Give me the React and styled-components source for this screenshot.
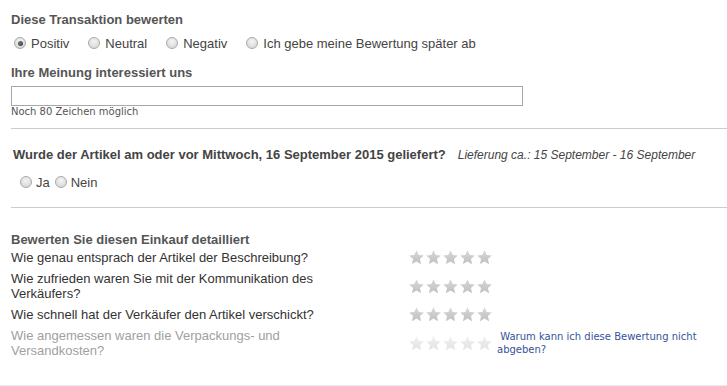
import styled, { createGlobalStyle } from "styled-components"

const Global = createGlobalStyle`
  body {
    margin: 0;
    background: #ffffff;
    font-family: "Liberation Sans", Arial, sans-serif;
  }
`

const questions = [
  { text: "Wie genau entsprach der Artikel der Beschreibung?" },
  { text: "Wie zufrieden waren Sie mit der Kommunikation des Verkäufers?" },
  { text: "Wie schnell hat der Verkäufer den Artikel verschickt?" },
  { text: "Wie angemessen waren die Verpackungs- und Versandkosten?", disabled: true },
]

function Radio({ checked, label }) {
  return (
    <Option>
      <Circle $checked={checked} />
      <span>{label}</span>
    </Option>
  )
}

function Stars({ disabled }) {
  const id = disabled ? "starOff" : "starOn"
  return (
    <StarRow>
      {[0, 1, 2, 3, 4].map((i) => (
        <svg key={i} width="15" height="15" viewBox="0 0 24 24">
          <defs>
            <linearGradient id={id} x1="0" y1="0" x2="0" y2="1">
              <stop offset="0" stopColor={disabled ? "#f0f0f0" : "#d8d8d8"} />
              <stop offset="1" stopColor={disabled ? "#e3e3e3" : "#c0c0c0"} />
            </linearGradient>
          </defs>
          <path
            d="M12 0.5l3.5 7.6 8.2.8-6.2 5.6 1.8 8.1L12 18.4l-7.3 4.2 1.8-8.1L.3 8.9l8.2-.8z"
            fill={`url(#${id})`}
          />
        </svg>
      ))}
    </StarRow>
  )
}

export default function App() {
  return (
    <Page>
      <Global />
      <Section>
        <Title>Diese Transaktion bewerten</Title>
        <Options>
          <Radio checked label="Positiv" />
          <Radio label="Neutral" />
          <Radio label="Negativ" />
          <Radio label="Ich gebe meine Bewertung später ab" />
        </Options>
        <Title $top={14}>Ihre Meinung interessiert uns</Title>
        <Comment type="text" />
        <Hint>Noch 80 Zeichen möglich</Hint>
      </Section>
      <Divider />
      <Delivery>
        <Question>
          Wurde der Artikel am oder vor Mittwoch, 16 September 2015 geliefert?
          <Estimate>Lieferung ca.: 15 September - 16 September</Estimate>
        </Question>
        <YesNo>
          <Radio label="Ja" />
          <Radio label="Nein" />
        </YesNo>
      </Delivery>
      <Divider />
      <Detail>
        <Title>Bewerten Sie diesen Einkauf detailliert</Title>
        <Grid>
          {questions.map((q, i) => (
            <Row key={i}>
              <Label $disabled={q.disabled}>{q.text}</Label>
              <Stars disabled={q.disabled} />
              {q.disabled ? (
                <Why href="#">&nbsp;Warum kann ich diese Bewertung nicht abgeben?</Why>
              ) : (
                <span />
              )}
            </Row>
          ))}
        </Grid>
      </Detail>
      <Bottom />
    </Page>
  )
}

const Page = styled.div`
  width: 727px;
  height: 386px;
  overflow: hidden;
  display: flex;
  flex-direction: column;
`

const Section = styled.div`
  padding: 12px 0 0 11px;
  display: flex;
  flex-direction: column;
  align-items: flex-start;
`

const Title = styled.div`
  font-size: 13px;
  line-height: 15px;
  font-weight: bold;
  color: #555555;
  margin-top: ${(p) => p.$top || 0}px;
`

const Options = styled.div`
  display: flex;
  align-items: center;
  gap: 19px;
  height: 16px;
  margin: 8px 0 0 3px;
`

const Option = styled.label`
  display: inline-flex;
  align-items: center;
  gap: 5px;
  font-size: 13px;
  color: #444444;
`

const Circle = styled.span`
  width: 12px;
  height: 12px;
  box-sizing: border-box;
  border-radius: 50%;
  border: 1px solid #a9a9a9;
  background: radial-gradient(circle at 50% 35%, #f4f4f4 0%, #dcdcdc 70%, #cfcfcf 100%);
  position: relative;
  &::after {
    content: "";
    display: ${(p) => (p.$checked ? "block" : "none")};
    position: absolute;
    left: 2.5px;
    top: 2.5px;
    width: 5px;
    height: 5px;
    border-radius: 50%;
    background: radial-gradient(circle at 40% 35%, #777 0%, #333 100%);
  }
`

const Comment = styled.input`
  margin: 6px 0 0 0;
  width: 512px;
  height: 20px;
  box-sizing: border-box;
  border: 1px solid #a8a8a8;
  padding: 0 3px;
  font-size: 13px;
  outline: none;
`

const Hint = styled.div`
  font-family: "DejaVu Sans", Verdana, sans-serif;
  font-size: 10px;
  line-height: 12px;
  color: #555555;
`

const Divider = styled.hr`
  margin: 10px 0 0 11px;
  border: none;
  border-top: 1px solid #cccccc;
  height: 0;
`

const Delivery = styled.div`
  padding: 18px 0 7px 13px;
`

const Question = styled.div`
  font-size: 13px;
  line-height: 15px;
  font-weight: bold;
  color: #444444;
`

const Estimate = styled.span`
  font-size: 12px;
  font-weight: normal;
  font-style: italic;
  color: #444444;
  margin-left: 12px;
`

const YesNo = styled.div`
  display: flex;
  align-items: center;
  gap: 5px;
  height: 16px;
  margin: 11px 0 0 7px;
  label {
    gap: 4px;
  }
`

const Detail = styled.div`
  padding: 24px 0 0 11px;
`

const Grid = styled.div`
  display: flex;
  flex-direction: column;
`

const Row = styled.div`
  display: grid;
  grid-template-columns: 398px 88px 215px;
  align-items: center;
  padding: 3px 0;
`

const Label = styled.div`
  max-width: 335px;
  font-size: 13px;
  line-height: 15px;
  color: ${(p) => (p.$disabled ? "#a0a0a0" : "#333333")};
`

const StarRow = styled.div`
  display: flex;
  gap: 2px;
`

const Why = styled.a`
  font-family: "DejaVu Sans", Verdana, sans-serif;
  font-size: 10px;
  line-height: 13px;
  color: #35549a;
  text-decoration: none;
`

const Bottom = styled.div`
  margin-top: auto;
  height: 1px;
  background: #ececec;
`
